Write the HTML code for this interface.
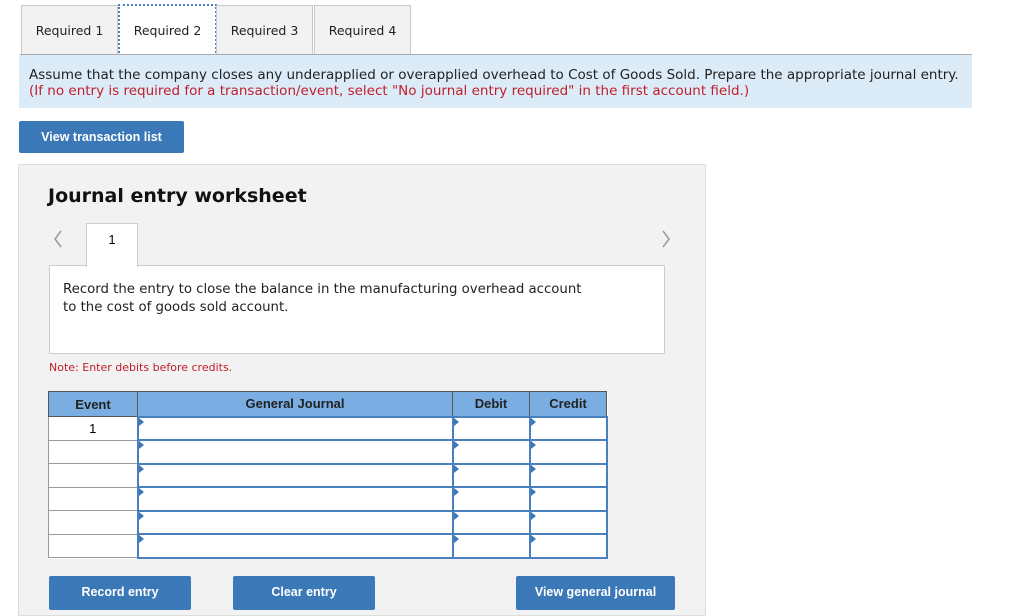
<!DOCTYPE html><html><head><style>
body{margin:0;width:1024px;height:607px;background:#fff;position:relative;overflow:hidden;font-family:"DejaVu Sans",Verdana,sans-serif}
.a{position:absolute}
.tab{position:absolute;top:5px;height:48px;background:#f2f2f2;border:1px solid #c8c8c8;border-bottom:none;font-size:12.5px;line-height:50px;text-align:center;color:#222}
.btn{position:absolute;background:#3b78b8;color:#fff;font:bold 12.5px "Liberation Sans",Arial,sans-serif;text-align:center;border-radius:2px}
td{padding:0;border:1px solid #999}
.in{border:2px solid #4a7fbf;background:#fff;position:relative}
.in:before{content:"";position:absolute;left:0;top:0;border-left:5px solid #3b78b8;border-top:4px solid transparent;border-bottom:4px solid transparent}
tr.r{height:23.5px}
</style></head><body>
<div class="tab" style="left:21px;width:95px">Required 1</div>
<div class="tab" style="left:118px;width:95px;background:#fff;border:2px dotted #4a7fbf;height:48px;top:4px">Required 2</div>
<div class="tab" style="left:216px;width:95px">Required 3</div>
<div class="tab" style="left:314px;width:95px">Required 4</div>
<div class="a" style="left:20px;top:54px;width:952px;height:1px;background:#aaa"></div>
<div class="a" style="left:19px;top:55px;width:953px;height:53px;background:#dcebf8;font-size:13.5px;line-height:16.5px;padding:0">
<div style="position:absolute;left:10px;top:12px;color:#222;white-space:nowrap">Assume that the company closes any underapplied or overapplied overhead to Cost of Goods Sold. Prepare the appropriate journal entry.</div>
<div style="position:absolute;left:10px;top:28px;color:#c0202a;white-space:nowrap">(If no entry is required for a transaction/event, select "No journal entry required" in the first account field.)</div></div>
<div class="btn" style="left:19px;top:121px;width:165px;height:32px;line-height:32px">View transaction list</div>
<div class="a" style="left:18px;top:164px;width:686px;height:450px;background:#f2f2f2;border:1px solid #ddd"></div>
<div class="a" style="left:48px;top:185px;font-size:19px;font-weight:bold;color:#111">Journal entry worksheet</div>
<svg class="a" style="left:52px;top:230px" width="12" height="18"><path d="M9 1 L3 9 L9 17" fill="none" stroke="#999" stroke-width="1.5"/></svg>
<svg class="a" style="left:660px;top:230px" width="12" height="18"><path d="M3 1 L9 9 L3 17" fill="none" stroke="#999" stroke-width="1.5"/></svg>
<div class="a" style="left:49px;top:265px;width:614px;height:87px;background:#fff;border:1px solid #ccc"></div>
<div class="a" style="left:86px;top:223px;width:50px;height:43px;background:#fff;border:1px solid #ccc;border-bottom:none;font:13px 'Liberation Sans',Arial;text-align:center;line-height:32px">1</div>
<div class="a" style="left:63px;top:281px;font-size:13.3px;line-height:18px;color:#222">Record the entry to close the balance in the manufacturing overhead account<br>to the cost of goods sold account.</div>
<div class="a" style="left:49px;top:361px;font-size:11px;color:#c0202a">Note: Enter debits before credits.</div>
<table class="a" style="left:48px;top:391px;border-collapse:collapse;font:13px 'Liberation Sans',Arial;background:#fff">
<tr style="height:25px;background:#7aaee3;font-weight:bold;color:#222;text-align:center"><td style="width:88px;border-color:#555">Event</td><td style="width:314px;border-color:#555">General Journal</td><td style="width:76px;border-color:#555">Debit</td><td style="width:76px;border-color:#555">Credit</td></tr>
<tr class="r"><td style="text-align:center">1</td><td class="in"></td><td class="in"></td><td class="in"></td></tr>
<tr class="r"><td></td><td class="in"></td><td class="in"></td><td class="in"></td></tr>
<tr class="r"><td></td><td class="in"></td><td class="in"></td><td class="in"></td></tr>
<tr class="r"><td></td><td class="in"></td><td class="in"></td><td class="in"></td></tr>
<tr class="r"><td></td><td class="in"></td><td class="in"></td><td class="in"></td></tr>
<tr class="r"><td></td><td class="in"></td><td class="in"></td><td class="in"></td></tr>
</table>
<div class="btn" style="left:49px;top:576px;width:142px;height:34px;line-height:33px">Record entry</div>
<div class="btn" style="left:233px;top:576px;width:142px;height:34px;line-height:33px">Clear entry</div>
<div class="btn" style="left:516px;top:576px;width:159px;height:34px;line-height:33px">View general journal</div>
</body></html>
